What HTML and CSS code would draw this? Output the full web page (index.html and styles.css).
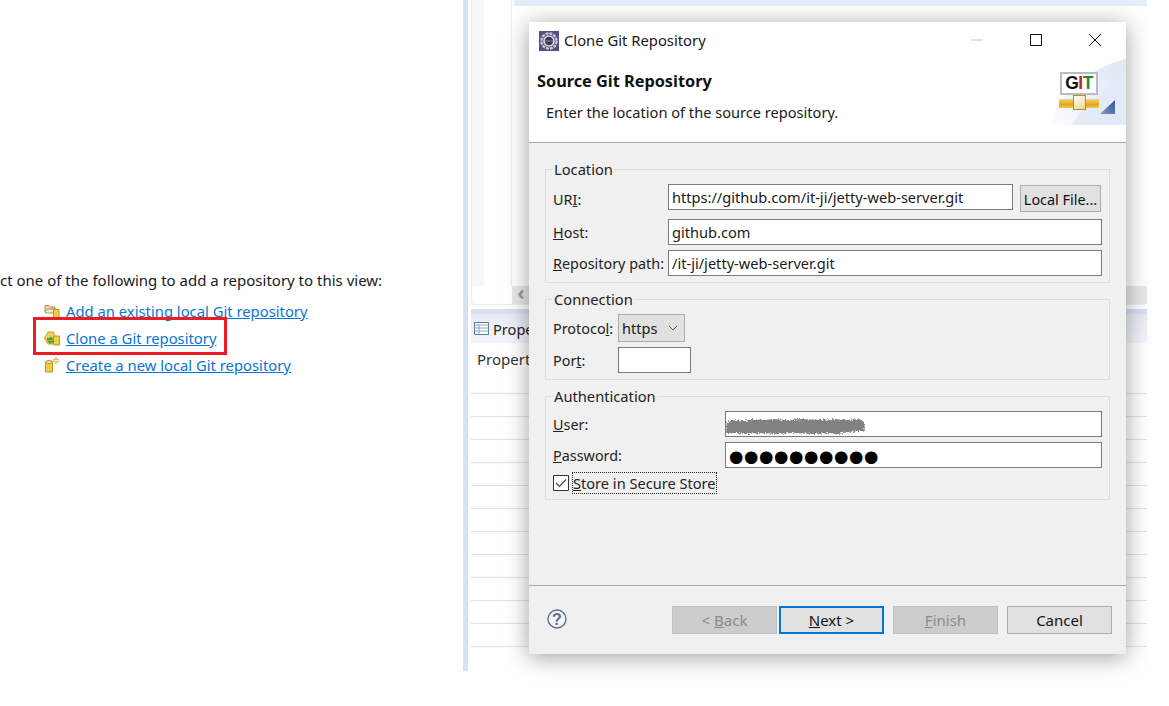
FILE: index.html
```html
<!DOCTYPE html>
<html lang="en">
<head>
<meta charset="utf-8">
<title>Clone Git Repository</title>
<link rel="stylesheet" href="styles.css">
</head>
<body>
<div class="ide">
  <section class="repo-view">
    <p class="repo-intro">ct one of the following to add a repository to this view:</p>
    <ul class="repo-links">
      <li>
        <svg class="repo-icon" viewBox="0 0 16 16"><path d="M1 5V2.500h4l1.500 1.500H11v2H4L1 9z" fill="#f3dca6" stroke="#a98c57"/><path d="M1 9l2-3h7l-1 4H2z" fill="#f6e7c2" stroke="#b59a62"/><path d="M9.500 6.500h5.500v8h-5.500z" fill="#f1cd45" stroke="#b59a2a"/></svg>
        <a href="#">Add an existing local Git repository</a>
      </li>
      <li>
        <svg class="repo-icon" viewBox="0 0 16 16"><path d="M.5 8l3.500-6h6v12H4z" fill="#f4cf55" stroke="#c6a233"/><path d="M9.500 6h6v9h-6z" fill="#f1cd45" stroke="#b59a2a"/><path d="M3 9h5L6 7M10 11.500H5l2 2" fill="none" stroke="#4f9e35" stroke-width="1.800"/></svg>
        <a href="#">Clone a Git repository</a>
      </li>
      <li>
        <svg class="repo-icon" viewBox="0 0 16 16"><path d="M1.500 5h7v10h-7z" fill="#f1cd45" stroke="#b59a2a"/><ellipse cx="5" cy="5" rx="3.500" ry="1.500" fill="#f8e690" stroke="#b59a2a"/><path d="M12 0.500v6M9 3.500h6" stroke="#c9a94a" stroke-width="2.400"/><path d="M12 1v5M9.500 3.500h5" stroke="#fbf3d0" stroke-width="1"/></svg>
        <a href="#">Create a new local Git repository</a>
      </li>
    </ul>
    <div class="callout"></div>
  </section>
  <div class="sash"></div>
  <div class="workbench">
    <section class="editor">
      <div class="editor-main">
        <div class="ruler"></div>
        <div class="gutter"><span class="line-no">19</span></div>
        <div class="code"><div class="current-line"></div></div>
      </div>
      <div class="hscroll"><div class="hscroll-blank"></div><div class="hscroll-btn">‹</div><div class="hscroll-track"></div></div>
    </section>
    <section class="props">
      <div class="props-tab">
        <svg class="props-icon" viewBox="0 0 15 13"><path d="M.5.500h14v12H.5z" fill="#fff" stroke="#5b7a9c"/><path d="M.5 3h14M5 3v9.500M.5 6h14M.5 9h14" stroke="#8fa6bf"/></svg>
        <span>Prope</span>
      </div>
      <div class="props-head">Property</div>
      <div class="props-rows">
        <div class="props-row"></div><div class="props-row"></div><div class="props-row"></div><div class="props-row"></div><div class="props-row"></div><div class="props-row"></div><div class="props-row"></div><div class="props-row"></div><div class="props-row"></div><div class="props-row"></div><div class="props-row"></div><div class="props-row"></div>
      </div>
    </section>
  </div>
</div>

<div class="dialog">
  <header class="titlebar">
    <svg class="app-icon" viewBox="0 0 20 20"><rect width="20" height="20" fill="#5a4a86"/><circle cx="10" cy="10" r="7.600" fill="none" stroke="#c9c9ce" stroke-width="2.400" stroke-dasharray="3 1"/><circle cx="10" cy="10" r="5.800" fill="#dcdce0"/><circle cx="10" cy="10" r="4.200" fill="#3a3658"/><path d="M5.800 10h8.400" stroke="#8a86a8"/></svg>
    <span class="title-text">Clone Git Repository</span>
    <span class="win-controls">
      <svg class="win-btn" viewBox="0 0 12 12"><path d="M0 6h12" stroke="#c4c4c4"/></svg>
      <svg class="win-btn" viewBox="0 0 12 12"><path d="M.5.500h11v11H.5z" fill="none" stroke="#111"/></svg>
      <svg class="win-btn" viewBox="0 0 12 12"><path d="M0 0l12 12M12 0L0 12" stroke="#111"/></svg>
    </span>
  </header>
  <div class="banner">
    <div class="banner-text">
      <h1 class="banner-title">Source Git Repository</h1>
      <p class="banner-desc">Enter the location of the source repository.</p>
    </div>
    <div class="banner-art">
      <svg class="banner-wave" viewBox="0 0 76 66"><defs><linearGradient id="wave" x1="0" y1="1" x2="1" y2="0"><stop offset="0" stop-color="#fbfcfe"/><stop offset="1" stop-color="#dde6f7"/></linearGradient><linearGradient id="tri" x1="0" y1="1" x2="1" y2="0"><stop offset="0" stop-color="#7f9cc9"/><stop offset="1" stop-color="#34538c"/></linearGradient></defs><path d="M0 66C8 36 40 8 76 0v66z" fill="url(#wave)"/><path d="M22 66C32 48 56 26 76 22v44z" fill="#e4ebf8"/><path d="M50 55l15-14v14z" fill="url(#tri)"/></svg>
      <div class="git-badge"><span class="git-g">G</span><span class="git-i">I</span><span class="git-t">T</span></div>
      <div class="git-pipe"><div class="git-joint"></div></div>
    </div>
  </div>
  <main class="dialog-body">
    <fieldset class="group group-location">
      <legend>Location</legend>
      <div class="form-grid">
        <label class="field-label">UR<u>I</u>:</label>
        <div class="uri-row"><div class="textbox">https://github.com/it-ji/jetty-web-server.git</div><button class="btn btn-local" type="button">Local File...</button></div>
        <label class="field-label"><u>H</u>ost:</label>
        <div class="textbox">github.com</div>
        <label class="field-label"><u>R</u>epository path:</label>
        <div class="textbox">/it-ji/jetty-web-server.git</div>
      </div>
    </fieldset>
    <fieldset class="group group-connection">
      <legend>Connection</legend>
      <div class="conn-grid">
        <label class="field-label">Protoco<u>l</u>:</label>
        <div class="combo"><span>https</span><svg class="combo-arrow" viewBox="0 0 10 6"><path d="M1 1l4 4 4-4" fill="none" stroke="#555"/></svg></div>
        <label class="field-label">Por<u>t</u>:</label>
        <div class="textbox port"></div>
      </div>
    </fieldset>
    <fieldset class="group group-auth">
      <legend>Authentication</legend>
      <div class="auth-grid">
        <label class="field-label"><u>U</u>ser:</label>
        <div class="textbox masked"><svg class="scribble" viewBox="0 0 142 18"><defs><filter id="rough" x="-5%" y="-30%" width="110%" height="160%"><feTurbulence type="fractalNoise" baseFrequency=".55" numOctaves="2" seed="4"/><feDisplacementMap in="SourceGraphic" scale="5"/></filter></defs><path d="M2 5l8-2 10 1 6-2 14 1 8-1 16 1 12-1 20 1 14-1 12 1 12-1 5 3 1 7-3 2-14 1-10 2-8-1-16 1-22-1-14 1-18-1-14 1-10-1-8 1-4-3 2-2z" fill="#828282" filter="url(#rough)"/></svg></div>
        <label class="field-label"><u>P</u>assword:</label>
        <div class="textbox dots">●●●●●●●●●●</div>
      </div>
      <div class="store-row">
        <svg class="checkbox" viewBox="0 0 16 16"><path d="M.5.500h15v15H.5z" fill="#fff" stroke="#333"/><path d="M3 8l3.500 3.500L13 4.500" fill="none" stroke="#444" stroke-width="1.200"/></svg>
        <span class="store-label"><u>S</u>tore in Secure Store</span>
      </div>
    </fieldset>
  </main>
  <footer class="dialog-footer">
    <svg class="help" viewBox="0 0 20 20"><circle cx="10" cy="10" r="9" fill="#f4f5f8" stroke="#5b6f8c" stroke-width="1.400"/><text x="10" y="15.500" text-anchor="middle" class="help-q">?</text></svg>
    <div class="wizard-buttons">
      <button class="btn btn-wiz" disabled type="button">&lt; <u>B</u>ack</button>
      <button class="btn btn-wiz btn-default" type="button"><u>N</u>ext &gt;</button>
      <button class="btn btn-wiz btn-finish" disabled type="button"><u>F</u>inish</button>
      <button class="btn btn-wiz btn-cancel" type="button">Cancel</button>
    </div>
  </footer>
</div>
</body>
</html>
```

FILE: styles.css
```css
* { box-sizing: border-box; }
html, body { margin: 0; padding: 0; background: #fff; }
body {
  width: 1169px;
  height: 706px;
  overflow: hidden;
  position: relative;
  font-family: "Noto Sans", "Open Sans", sans-serif;
  font-size: 14.6px;
  color: #1a1a1a;
}
.ide { display: flex; height: 671px; }

.repo-view { width: 463px; position: relative; overflow: hidden; padding-top: 270px; }
.repo-intro { margin: 0; line-height: 20px; white-space: nowrap; font-size: 15px; }
.repo-links { list-style: none; margin: 7px 0 0; padding: 0 0 0 44px; font-size: 14.8px; }
.repo-links li { display: flex; align-items: center; height: 27px; gap: 6px; }
.repo-icon { width: 16px; height: 16px; flex: none; }
.repo-links a { color: #0a75d6; }
.callout { position: absolute; left: 33px; top: 317px; width: 194px; height: 38px; border: 3px solid #ed1c24; }

.sash { width: 5px; background: #d9e0f2; }

.workbench { width: 679px; padding-left: 3px; display: flex; flex-direction: column; overflow: hidden; }
.editor { height: 305px; border-left: 1px solid #eee; border-bottom: 1px solid #eee; border-radius: 0 0 4px 4px; display: flex; flex-direction: column; }
.editor-main { flex: 1; display: flex; min-height: 0; }
.ruler { width: 12px; background: #f7f7f7; }
.gutter { width: 28px; border-right: 1px solid #eee; position: relative; overflow: hidden; }
.line-no { position: absolute; left: 1px; top: -16px; color: #8a8a8a; font-size: 14px; line-height: 18px; }
.code { flex: 1; padding-left: 2px; }
.current-line { height: 6px; background: #e4eefb; }
.hscroll { height: 18px; display: flex; }
.hscroll-blank { width: 40px; }
.hscroll-btn { width: 18px; background: #e8e8e8; color: #999; font-size: 20px; font-weight: 700; line-height: 14px; text-align: center; }
.hscroll-track { flex: 1; background: #e8e8e8; }

.props { margin-top: 4px; flex: 1; min-height: 0; display: flex; flex-direction: column; }
.props-tab { height: 34px; border-top: 5px solid #d9e0f2; background: linear-gradient(#e6ebf5, #f4f5fb); display: flex; align-items: center; gap: 4px; padding-left: 3px; white-space: nowrap; color: #222; }
.props-icon { width: 15px; height: 13px; flex: none; }
.props-head { height: 50px; padding: 6px 0 0 6px; color: #333; font-size: 15px; }
.props-rows { flex: 1; overflow: hidden; }
.props-row { height: 23px; border-top: 1px solid #e2e2e2; }

.dialog {
  position: absolute;
  left: 529px;
  top: 22px;
  width: 597px;
  height: 632px;
  background: #f0f0f0;
  box-shadow: 0 3px 22px rgba(0, 0, 0, .38);
  display: flex;
  flex-direction: column;
}
.titlebar { height: 37px; background: #fff; display: flex; align-items: center; padding: 0 0 2px 10px; flex: none; }
.app-icon { width: 20px; height: 20px; flex: none; margin-top: 2px; }
.title-text { margin-left: 5px; font-size: 14.8px; }
.win-controls { margin-left: auto; display: flex; gap: 47px; padding-right: 25px; }
.win-btn { width: 12px; height: 12px; display: block; }
.banner { height: 84px; flex: none; background: #fff; border-bottom: 1px solid #a8a8a8; display: flex; justify-content: space-between; }
.banner-title { margin: 12px 0 0 8px; font-size: 16.300px; font-weight: 700; line-height: 20px; color: #111; }
.banner-desc { margin: 11px 0 0 17px; line-height: 20px; }
.banner-art { width: 76px; height: 66px; position: relative; }
.banner-wave { width: 76px; height: 66px; display: block; }
.git-badge { position: absolute; left: 10px; top: 13px; width: 38px; height: 23px; background: #fff; border: 2px solid #b9bdc0; font: 700 17.500px/19px "Liberation Sans", sans-serif; letter-spacing: -.5px; text-align: center; }
.git-g { color: #111; }
.git-i { color: #c8202c; }
.git-t { color: #2d8a32; }
.git-pipe { position: absolute; left: 9px; top: 40px; width: 40px; height: 9px; background: linear-gradient(#f6d76f, #e0a820 60%, #f0c84a); }
.git-joint { position: absolute; left: 14px; top: -4px; width: 13px; height: 15px; background: linear-gradient(135deg, #fff, #f3d68a); border: 1px solid #b58a2c; }

.dialog-body { flex: 1; padding: 17px 16px 0; display: flex; flex-direction: column; min-height: 0; }
.group { margin: 0; padding: 0 7px; border: 1px solid #dcdcdc; min-width: 0; }
.group legend { padding: 0 1px; line-height: 18px; font-size: 14.7px; color: #222; }
.group-location { height: 123px; }
.group-connection { height: 90px; margin-top: 7px; }
.group-auth { height: 113px; margin-top: 7px; }
.form-grid { display: grid; grid-template-columns: 115px 434px; grid-template-rows: 30px 26px 26px; row-gap: 5px; margin-top: 6px; align-items: center; }
.conn-grid { display: grid; grid-template-columns: 65px 73px; margin-top: 6px; row-gap: 5px; align-items: center; }
.auth-grid { display: grid; grid-template-columns: 172px 377px; grid-auto-rows: 26px; row-gap: 5px; margin-top: 6px; align-items: center; }
.field-label { white-space: nowrap; color: #222; font-size: 14.4px; }
.uri-row { display: flex; align-items: flex-start; gap: 7px; height: 30px; }
.uri-row .textbox { width: 345px; flex: none; }
.textbox { height: 26px; background: #fff; border: 1px solid #7a7a7a; padding: 0 3px; line-height: 24px; white-space: nowrap; overflow: hidden; color: #1a1a1a; }
.port { width: 73px; }
.masked { position: relative; overflow: visible; padding: 0; }
.scribble { position: absolute; left: -1px; top: 5px; width: 142px; height: 18px; }
.dots { font: 16.500px/28px "DejaVu Sans", sans-serif; color: #000; letter-spacing: .6px; padding-left: 3px; }
.combo { width: 67px; height: 28px; background: #e1e1e1; border: 1px solid #adadad; display: flex; align-items: center; justify-content: space-between; padding: 0 6px 0 3px; }
.combo-arrow { width: 10px; height: 6px; }
.store-row { display: flex; align-items: center; gap: 4px; margin-top: 5px; height: 20px; }
.checkbox { width: 16px; height: 16px; flex: none; }
.store-label { outline: 1px dotted #222; line-height: 20px; white-space: nowrap; color: #222; }

.dialog-footer { height: 69px; flex: none; border-top: 1px solid #a8a8a8; display: flex; justify-content: space-between; padding: 20px 14px 0 18px; }
.help { width: 20px; height: 20px; margin-top: 3px; flex: none; }
.help-q { font: 700 16px "Liberation Sans", sans-serif; fill: #5b6f8c; }
.wizard-buttons { display: flex; }
.btn { font: inherit; color: #111; background: #e1e1e1; border: 1px solid #adadad; padding: 0; white-space: nowrap; }
.btn-local { width: 81px; height: 27px; margin-top: 1px; flex: none; font-size: 14.4px; line-height: 27px; }
.btn-wiz { width: 105px; height: 28px; font-size: 15px; }
.btn-wiz:disabled { background: #cccccc; border-color: #bfbfbf; color: #8a8a8a; }
.btn-default { margin-left: 2px; border: 2px solid #0078d7; }
.btn-finish { margin-left: 9px; }
.btn-cancel { margin-left: 9px; }
```
